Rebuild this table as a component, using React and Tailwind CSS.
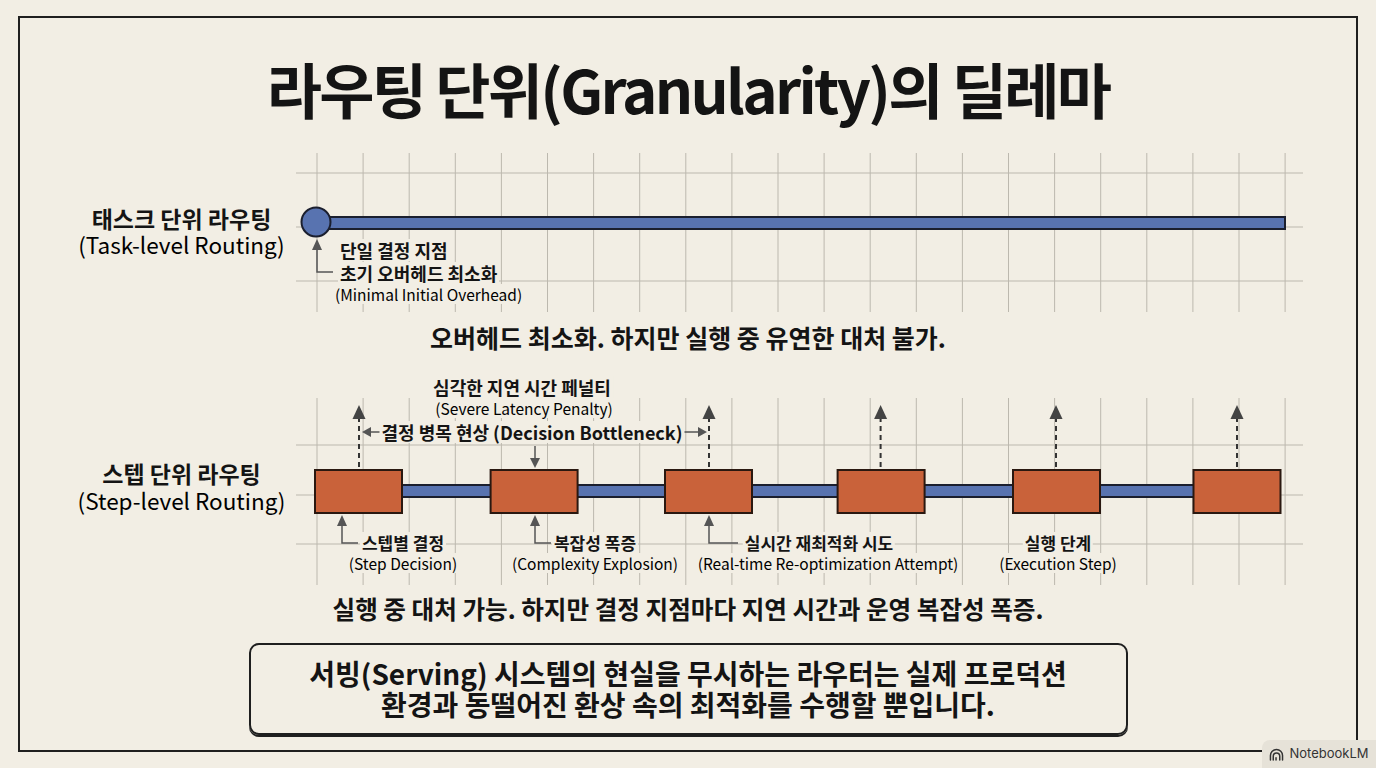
import React from "react";

const vx = Array.from({ length: 22 }, (_, i) => 21 + i * 46.1);

function Grid({ y1, y2, hs }) {
  return (
    <g stroke="#bcb8ae" strokeWidth="1">
      {vx.map((x, i) => (
        <line key={"v" + i} x1={x} x2={x} y1={y1} y2={y2} />
      ))}
      {hs.map((y, i) => (
        <line key={"h" + i} x1={0} x2={1007} y1={y} y2={y} />
      ))}
    </g>
  );
}

const boxes = [19, 194.6, 369, 541.6, 717, 897.5];
const ups = [63, 413, 584.6, 760, 941];

function TaskDiagram() {
  return (
    <div className="relative w-[1007px] h-[159px]">
      <svg className="absolute inset-0" width="1007" height="159" viewBox="0 0 1007 159">
        <Grid y1={0} y2={159} hs={[20, 74, 128]} />
        <rect x="20" y="64" width="969" height="12" fill="#5873b0" stroke="#1b1f2e" strokeWidth="2" />
        <circle cx="20" cy="69" r="14.5" fill="#5873b0" stroke="#1b1f2e" strokeWidth="2" />
        <path d="M21 96V119H37" fill="none" stroke="#555" strokeWidth="1.5" />
        <path d="M21 86l-5 11h10z" fill="#555" />
      </svg>
      <span className="absolute left-[42px] top-[86px] bg-[#f2eee4] px-[2px] text-[18px] leading-[22px] font-bold">단일 결정 지점</span>
      <span className="absolute left-[42px] top-[109px] bg-[#f2eee4] px-[2px] text-[18px] leading-[22px] font-bold">초기 오버헤드 최소화</span>
      <span className="absolute left-[37px] top-[131px] bg-[#f2eee4] px-[2px] text-[15.5px] leading-[20px] text-black">(Minimal Initial Overhead)</span>
    </div>
  );
}

function StepDiagram() {
  return (
    <div className="relative w-[1007px] h-[220px]">
      <svg className="absolute inset-0" width="1007" height="220" viewBox="0 0 1007 220">
        <Grid y1={28} y2={215} hs={[75, 125, 174]} />
        <rect x="19" y="115" width="965" height="12" fill="#5873b0" stroke="#1b1f2e" strokeWidth="2" />
        {boxes.map((x, i) => (
          <rect key={i} x={x} y="100" width="87" height="43" fill="#c9623a" stroke="#2a1810" strokeWidth="2" />
        ))}
        {ups.map((x, i) => (
          <g key={i}>
            <line x1={x} x2={x} y1="47" y2="99" stroke="#333" strokeWidth="2" strokeDasharray="5 4" />
            <path d={`M${x} 35l-6.5 14h13z`} fill="#444" />
          </g>
        ))}
        <line x1="239" x2="239" y1="76" y2="90" stroke="#555" strokeWidth="1.5" />
        <path d="M239 98l-5-10h10z" fill="#555" />
        <line x1="85" x2="72" y1="62" y2="62" stroke="#555" strokeWidth="1.5" />
        <path d="M66 62l9-5v10z" fill="#555" />
        <line x1="387" x2="404" y1="62" y2="62" stroke="#555" strokeWidth="1.5" />
        <path d="M411 62l-9-5v10z" fill="#555" />
        <path d="M46 155V173H62" fill="none" stroke="#555" strokeWidth="1.5" />
        <path d="M46 145l-5 11h10z" fill="#555" />
        <path d="M239 155V173H255" fill="none" stroke="#555" strokeWidth="1.5" />
        <path d="M239 145l-5 11h10z" fill="#555" />
        <path d="M413 155V173H442" fill="none" stroke="#555" strokeWidth="1.5" />
        <path d="M413 145l-5 11h10z" fill="#555" />
      </svg>
      <span className="absolute left-[226px] top-[6px] -translate-x-1/2 whitespace-nowrap bg-[#f2eee4] px-[2px] text-[18px] leading-[22px] font-bold">심각한 지연 시간 페널티</span>
      <span className="absolute left-[228px] top-[28px] -translate-x-1/2 whitespace-nowrap bg-[#f2eee4] px-[2px] text-[15.5px] leading-[20px] text-black">(Severe Latency Penalty)</span>
      <span className="absolute left-[236px] top-[51px] -translate-x-1/2 whitespace-nowrap bg-[#f2eee4] px-[2px] text-[18px] leading-[22px] font-bold">결정 병목 현상 (Decision Bottleneck)</span>

      <span className="absolute left-[107px] top-[162px] -translate-x-1/2 whitespace-nowrap bg-[#f2eee4] px-[2px] text-[17px] leading-[22px] font-bold">스텝별 결정</span>
      <span className="absolute left-[107px] top-[183px] -translate-x-1/2 whitespace-nowrap bg-[#f2eee4] px-[2px] text-[15.5px] leading-[20px] text-black">(Step Decision)</span>
      <span className="absolute left-[299px] top-[162px] -translate-x-1/2 whitespace-nowrap bg-[#f2eee4] px-[2px] text-[17px] leading-[22px] font-bold">복잡성 폭증</span>
      <span className="absolute left-[299px] top-[183px] -translate-x-1/2 whitespace-nowrap bg-[#f2eee4] px-[2px] text-[15.5px] leading-[20px] text-black">(Complexity Explosion)</span>
      <span className="absolute left-[523px] top-[162px] -translate-x-1/2 whitespace-nowrap bg-[#f2eee4] px-[2px] text-[17px] leading-[22px] font-bold">실시간 재최적화 시도</span>
      <span className="absolute left-[532px] top-[183px] -translate-x-1/2 whitespace-nowrap bg-[#f2eee4] px-[2px] text-[15.5px] leading-[20px] text-black">(Real-time Re-optimization Attempt)</span>
      <span className="absolute left-[762px] top-[162px] -translate-x-1/2 whitespace-nowrap bg-[#f2eee4] px-[2px] text-[17px] leading-[22px] font-bold">실행 단계</span>
      <span className="absolute left-[762px] top-[183px] -translate-x-1/2 whitespace-nowrap bg-[#f2eee4] px-[2px] text-[15.5px] leading-[20px] text-black">(Execution Step)</span>
    </div>
  );
}

function NotebookIcon() {
  return (
    <svg width="15" height="13" viewBox="0 0 16 14" fill="none" stroke="#333" strokeWidth="1.6" strokeLinecap="round">
      <path d="M1.5 13V8a6.5 6.5 0 0 1 13 0v5" />
      <path d="M4.5 13V9a3.5 3.5 0 0 1 7 0v4" />
      <path d="M7.5 13v-2.5" />
    </svg>
  );
}

export default function App() {
  return (
    <div className="relative w-[1376px] h-[768px] overflow-hidden bg-[#f2eee4] text-[#141414] font-['Noto_Sans_CJK_KR',sans-serif]">
      <div className="ml-[18px] mt-[16px] w-[1340px] h-[736px] border-2 border-[#1f1f1f] flex flex-col">
        <div className="h-[135px] pt-[5px] flex items-center justify-center">
          <h1 className="text-[60px] leading-none font-bold tracking-[-0.045em]">라우팅 단위(Granularity)의 딜레마</h1>
        </div>

        <div className="h-[159px] flex">
          <div className="w-[276px] pl-[47px] pb-[3px] flex flex-col items-center justify-center leading-[26px]">
            <div className="font-bold text-[23px]">태스크 단위 라우팅</div>
            <div className="text-[22.5px] text-black">(Task-level Routing)</div>
          </div>
          <TaskDiagram />
        </div>

        <div className="h-[58px] pb-[7px] flex items-center justify-center text-[25px] font-bold">
          오버헤드 최소화. 하지만 실행 중 유연한 대처 불가.
        </div>

        <div className="h-[220px] flex">
          <div className="w-[276px] pl-[47px] pt-[13px] flex flex-col items-center justify-center leading-[27px]">
            <div className="font-bold text-[23px]">스텝 단위 라우팅</div>
            <div className="text-[22.5px] text-black">(Step-level Routing)</div>
          </div>
          <StepDiagram />
        </div>

        <div className="h-[36px] flex items-center justify-center text-[24.6px] font-bold">
          실행 중 대처 가능. 하지만 결정 지점마다 지연 시간과 운영 복잡성 폭증.
        </div>

        <div className="mx-auto mt-[17px] w-[879px] h-[92px] border-2 border-[#1f1f1f] rounded-[10px] shadow-[0_2px_0_#1f1f1f] flex flex-col items-center justify-center text-[28px] leading-[31px] font-bold">
          <div>서빙(Serving) 시스템의 현실을 무시하는 라우터는 실제 프로덕션</div>
          <div>환경과 동떨어진 환상 속의 최적화를 수행할 뿐입니다.</div>
        </div>
      </div>

      <div className="absolute right-0 bottom-0 w-[114px] h-[28px] rounded-tl-[8px] bg-[#e6e2d8] flex items-center justify-center gap-[5px] text-[13px] text-[#333] font-['Inter',sans-serif]">
        <NotebookIcon />
        <span>NotebookLM</span>
      </div>
    </div>
  );
}
